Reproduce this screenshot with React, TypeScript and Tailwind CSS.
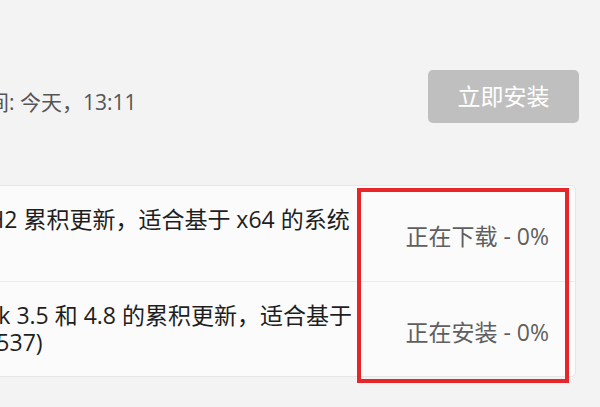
const updates = [
  {
    id: 1,
    lines: [{ text: "22H2 累积更新，适合基于 x64 的系统", shift: "-ml-[39px]" }],
    status: "正在下载 - 0%",
  },
  {
    id: 2,
    lines: [
      { text: "Framework 3.5 和 4.8 的累积更新，适合基于", shift: "-ml-[111px]" },
      { text: "(KB5017537)", shift: "-ml-[92px]" },
    ],
    status: "正在安装 - 0%",
  },
];

export default function App() {
  return (
    <div
      className="relative w-[600px] h-[407px] overflow-hidden bg-[#f3f3f3]"
      style={{ fontFamily: '"Open Sans", "Noto Sans CJK SC", sans-serif' }}
    >
      <div className="flex items-start justify-between pt-[70px] pr-[21px]">
        <div className="mt-[19px] -ml-[33px] whitespace-nowrap text-[21px] leading-[27px] text-[#555555]">
          时间: 今天，13:11
        </div>
        <button className="w-[151px] h-[53px] rounded-[5px] bg-[#bfbfbf] text-white text-[23px] flex items-center justify-center">
          立即安装
        </button>
      </div>

      <div className="mt-[62px] mr-[24px] bg-[#fbfbfb] border border-l-0 border-[#e6e6e6] rounded-r-[5px] divide-y divide-[#ebebeb]">
        {updates.map((u, i) => (
          <div
            key={u.id}
            className={`flex items-start justify-between overflow-hidden ${
              i === 0 ? "h-[96px]" : "h-[94px]"
            }`}
          >
            <div className="pt-[20px] text-[23px] leading-[27px] text-[#1e1e1e] overflow-hidden">
              {u.lines.map((l) => (
                <div key={l.text} className={`whitespace-nowrap ${l.shift}`}>
                  {l.text}
                </div>
              ))}
            </div>
            <div className="self-center mt-[6px] pr-[26px] whitespace-nowrap text-[23px] text-[#5f5f5f]">
              {u.status}
            </div>
          </div>
        ))}
      </div>

      {/* red annotation box */}
      <div className="absolute left-[357px] top-[188px] w-[212px] h-[195px] border-[4px] border-[#e8262a]" />
    </div>
  );
}
